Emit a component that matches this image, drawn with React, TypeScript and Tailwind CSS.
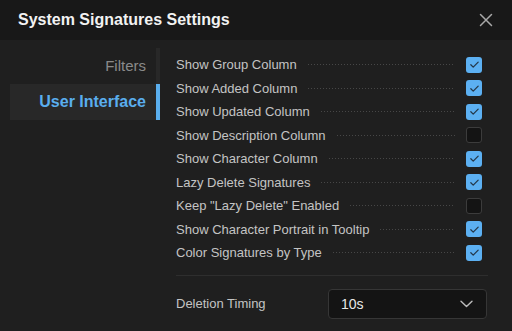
import { useState } from "react"

const options = [
  { label: "Show Group Column", checked: true },
  { label: "Show Added Column", checked: true },
  { label: "Show Updated Column", checked: true },
  { label: "Show Description Column", checked: false },
  { label: "Show Character Column", checked: true },
  { label: "Lazy Delete Signatures", checked: true },
  { label: 'Keep "Lazy Delete" Enabled', checked: false },
  { label: "Show Character Portrait in Tooltip", checked: true },
  { label: "Color Signatures by Type", checked: true },
]

function Checkbox({ checked }: { checked: boolean }) {
  if (!checked) {
    return (
      <div className="h-4 w-4 shrink-0 rounded-[3px] border border-[#3c3c3c] bg-[#141414]" />
    )
  }

  return (
    <div className="flex h-4 w-4 shrink-0 items-center justify-center rounded-[3px] bg-[#5cb0f2]">
      <svg width="11" height="11" viewBox="0 0 12 12" fill="none">
        <path
          d="M2 6.3l2.6 2.6L10 3.4"
          stroke="#25384a"
          strokeWidth="1.4"
          strokeLinecap="round"
          strokeLinejoin="round"
        />
      </svg>
    </div>
  )
}

function SettingRow({ label, checked }: { label: string; checked: boolean }) {
  return (
    <div className="flex h-[23.5px] items-center pr-[6px]">
      <span className="text-[13px] text-[#c4c4c4]">{label}</span>
      <div className="mx-[11px] h-px flex-1 bg-[linear-gradient(to_right,#474747_1px,transparent_1px)] bg-[length:3px_1px] bg-repeat-x" />
      <Checkbox checked={checked} />
    </div>
  )
}

function App() {
  const [tab] = useState("ui")

  return (
    <div className="h-[331px] w-[512px] overflow-hidden bg-[#1f1f1f] font-['Liberation_Sans',Arial,sans-serif]">
      <div className="flex h-10 items-center justify-between bg-[#181818] pl-[18px] pr-[19px]">
        <h1 className="text-[16px] font-bold text-[#f2f2f2]">
          System Signatures Settings
        </h1>
        <svg width="14" height="14" viewBox="0 0 14 14" fill="none">
          <path
            d="M1.5 1.5l11 11M12.5 1.5l-11 11"
            stroke="#a8a8a8"
            strokeWidth="1.5"
            strokeLinecap="round"
          />
        </svg>
      </div>

      <div className="flex pl-[10px] pr-[24px]">
        <nav className="mt-2 w-[150px] shrink-0">
          <div className="flex h-9 items-center justify-end border-r-4 border-[#282828] pt-px pr-[10px] text-[15px] text-[#8a8a8a]">
            Filters
          </div>
          <div
            className={`flex h-9 items-center justify-end border-r-4 pr-[10px] text-[16px] font-bold ${
              tab === "ui"
                ? "border-[#5aaeee] bg-[#282828] text-[#5aaeee]"
                : "border-[#282828] text-[#8a8a8a]"
            }`}
          >
            User Interface
          </div>
        </nav>

        <div className="ml-4 mt-[13px] flex-1">
          <div className="flex flex-col">
            {options.map((opt) => (
              <SettingRow key={opt.label} label={opt.label} checked={opt.checked} />
            ))}
          </div>

          <div className="mt-[10px] border-t border-[#2e2e2e]" />

          <div className="mt-[13px] flex items-center justify-between pr-px">
            <span className="pt-px text-[13px] text-[#c4c4c4]">Deletion Timing</span>
            <div className="flex h-[30px] w-[159px] items-center justify-between rounded border border-[#363636] bg-[#141414] pl-3 pr-[13px]">
              <span className="pt-px text-[14px] text-[#e8e8e8]">10s</span>
              <svg width="13" height="8" viewBox="0 0 13 8" fill="none">
                <path
                  d="M1 1.2l5.5 5.3 5.5-5.3"
                  stroke="#bdbdbd"
                  strokeWidth="1.4"
                  strokeLinecap="round"
                  strokeLinejoin="round"
                />
              </svg>
            </div>
          </div>
        </div>
      </div>
    </div>
  )
}

export default App
